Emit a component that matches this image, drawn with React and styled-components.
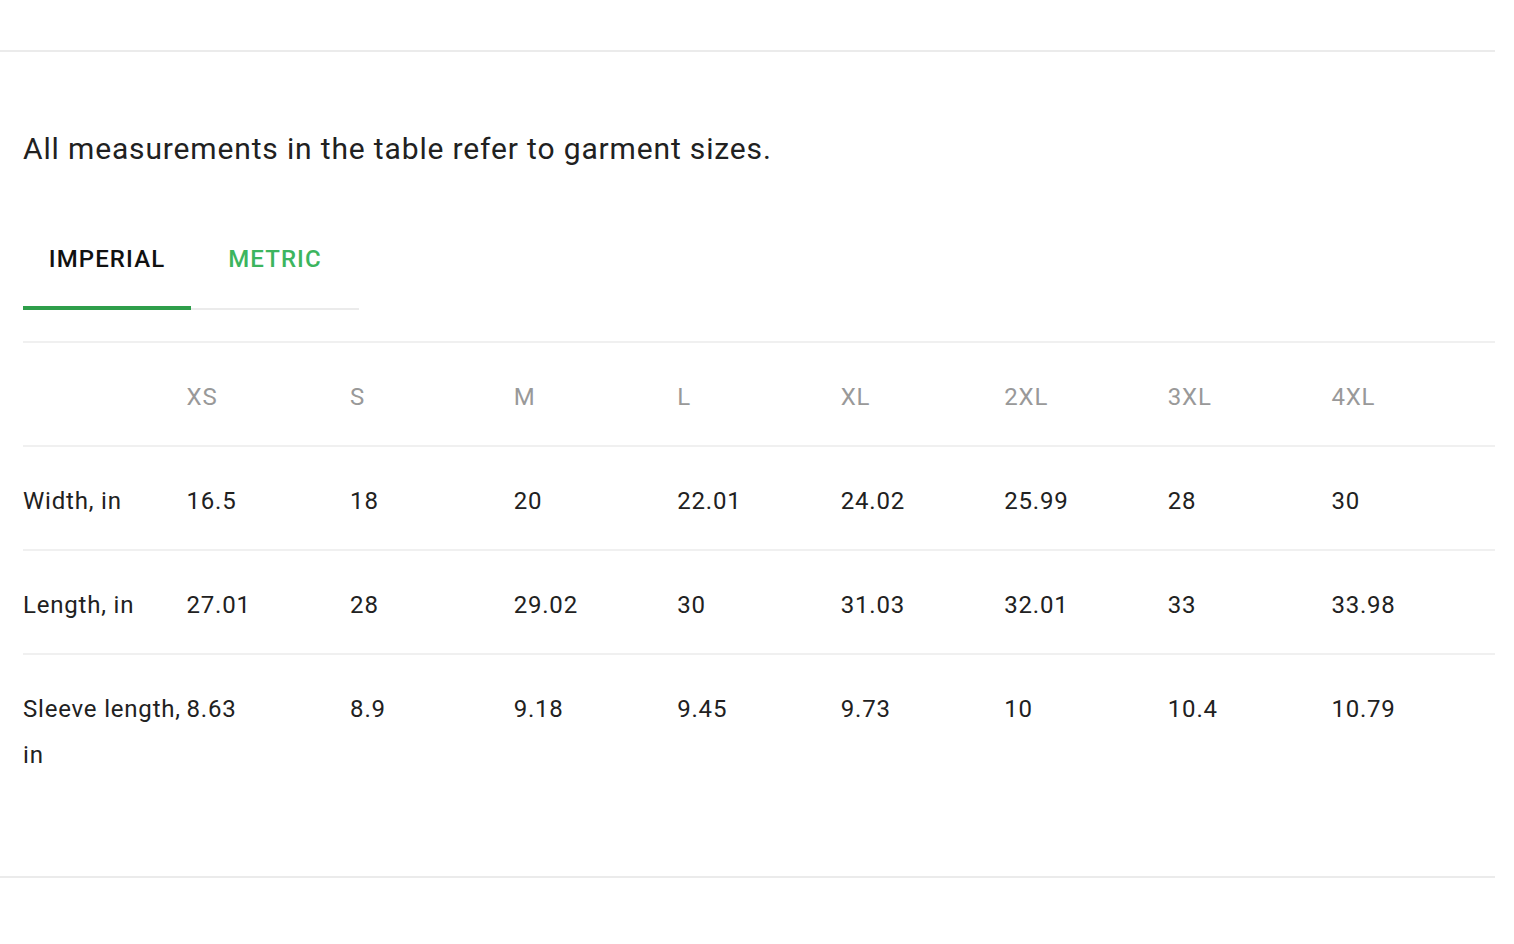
import React, { useState } from 'react';
import styled, { createGlobalStyle } from 'styled-components';

const GlobalStyle = createGlobalStyle`
    body{
        margin:0;
        background:#fff;
        font-family:Roboto, "Liberation Sans", sans-serif;
        color:#212121;
    }
`;

const Page = styled.div`
    width:1495px;
    margin-top:50px;
    border-top:2px solid #ebebeb;
    border-bottom:2px solid #ebebeb;
    padding:0 0 73px 23px;
    box-sizing:border-box;
`;

const Note = styled.p`
    margin:0;
    padding-top:77px;
    font-size:30px;
    line-height:40px;
    letter-spacing:0.85px;
    color:#212121;
`;

const TabList = styled.div`
    display:inline-flex;
    margin-top:41px;
    border-bottom:2px solid #ebebeb;
`;

const Tab = styled.button`
    width:168px;
    height:100px;
    margin-bottom:-2px;
    padding:2px 0 0;
    border:none;
    border-bottom:4px solid ${p => p.$active ? '#2e9e4a' : 'transparent'};
    background:none;
    font-family:inherit;
    font-size:24px;
    font-weight:500;
    letter-spacing:1.1px;
    color:${p => p.$active ? '#111' : '#3cb55e'};
    cursor:pointer;
`;

const Table = styled.table`
    width:1472px;
    margin-top:31px;
    border-collapse:collapse;
    table-layout:fixed;
    border-top:2px solid #f0f0f0;
    font-size:24px;
    letter-spacing:0.8px;
`;

const Row = styled.tr`
    border-bottom:${p => p.$last ? 'none' : '2px solid #f0f0f0'};
`;

const Head = styled.th`
    padding:31px 0 25px;
    text-align:left;
    font-weight:400;
    line-height:46px;
    color:#999;
`;

const Cell = styled.td`
    padding:31px 0 25px;
    line-height:46px;
    vertical-align:top;
    color:#212121;
`;

const sizes = ['XS', 'S', 'M', 'L', 'XL', '2XL', '3XL', '4XL'];

const rows = [
    ['Width, in', '16.5', '18', '20', '22.01', '24.02', '25.99', '28', '30'],
    ['Length, in', '27.01', '28', '29.02', '30', '31.03', '32.01', '33', '33.98'],
    ['Sleeve length, in', '8.63', '8.9', '9.18', '9.45', '9.73', '10', '10.4', '10.79'],
];

export default function App() {
    const [tab, setTab] = useState('imperial');
    return (
        <>
            <GlobalStyle />
            <Page>
                <Note>All measurements in the table refer to garment sizes.</Note>
                <TabList>
                    <Tab $active={tab === 'imperial'} onClick={() => setTab('imperial')}>IMPERIAL</Tab>
                    <Tab $active={tab === 'metric'} onClick={() => setTab('metric')}>METRIC</Tab>
                </TabList>
                <Table>
                    <thead>
                        <Row>
                            <Head />
                            {sizes.map(s => <Head key={s}>{s}</Head>)}
                        </Row>
                    </thead>
                    <tbody>
                        {rows.map((r, i) => (
                            <Row key={r[0]} $last={i === rows.length - 1}>
                                {r.map((c, j) => <Cell key={j}>{c}</Cell>)}
                            </Row>
                        ))}
                    </tbody>
                </Table>
            </Page>
        </>
    );
}
